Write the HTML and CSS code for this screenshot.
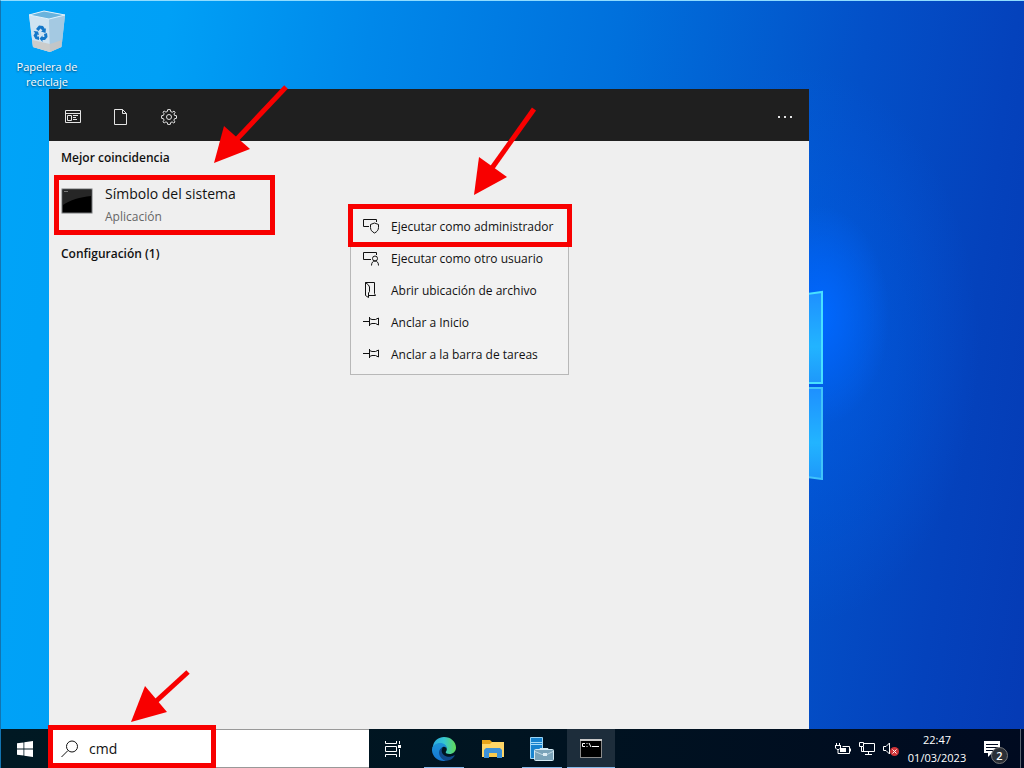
FILE: index.html
```html
<!DOCTYPE html>
<html lang="es">
<head>
  <meta charset="UTF-8" />
  <meta name="viewport" content="width=device-width, initial-scale=1.0"/>
  <title>Símbolo del sistema</title>
  <link rel="stylesheet" href="styles.css">
</head>
<body>
  <div class="desktop">
    <div class="shortcuts">
      <a href="#" class="shortcut">
        <svg width="40" height="44" viewBox="0 0 40 44">
          <path d="M2 6L17 2L38 6L34.500 38L23 43L6 38Z" fill="#b9d9ee"/>
          <path d="M2 6L22 10L23 43L6 38Z" fill="#cfe3f1"/>
          <path d="M22 10L38 6L34.500 38L23 43Z" fill="#a4c9e2"/>
          <path d="M5 31L23 35L35 31L34 38L23 43L6 38Z" fill="#c9c5c2" opacity=".8"/>
          <path d="M2 6L17 2L38 6L22 10Z" fill="#69b3dd" stroke="#dff1fb"/>
          <g fill="#1477c9">
            <path d="M9 20L12 16.500L16 17L18 20L19 19L18.500 24L14 22.500L15.500 21.500L13.500 19.500L11.500 22Z"/>
            <path d="M17 25L20 24L20.500 28L18 31H15.500V33L12.500 29.500L15.500 26.500V28H17.500Z"/>
            <path d="M6.500 22L11 22.500L12 26L10.500 25.500L10 27.500H12V31L8.500 30L6.500 26.500L8 24Z"/>
          </g>
        </svg>
        <span>Papelera de reciclaje</span>
      </a>
    </div>

    <main class="workspace">
      <section class="panel">
        <header class="panel-bar">
          <button type="button" aria-label="Aplicaciones">
            <svg width="16" height="16" viewBox="0 0 16 16"><path d="M.5 1.500H15.500V13.500H.5ZM.5 4.500H15.500M2.500 6.500H6.500V11.500H2.500ZM8 6.500H13M8 8.500H11M8 10.500H12"/></svg>
          </button>
          <button type="button" aria-label="Documentos">
            <svg width="16" height="16" viewBox="0 0 16 16"><path d="M1.500 .5H9.500L13.500 4.500V15.500H1.500ZM9.500 .5V4.500H13.500"/></svg>
          </button>
          <button type="button" aria-label="Configuración">
            <svg width="16" height="16" viewBox="0 0 16 16"><circle cx="8" cy="8" r="2.500"/><path d="M6.700 .6H9.300L9.700 2.600L11.300 3.200L13 2.100L14.100 3.300L13 5L13.500 6.400L15.500 6.700V9.300L13.500 9.700L12.900 11.200L14 12.900L12.800 14L11.100 12.900L9.700 13.500L9.300 15.400H6.700L6.300 13.500L4.900 12.900L3.200 14L2 12.800L3.100 11.100L2.500 9.700L.6 9.300V6.700L2.500 6.300L3.100 4.800L2 3.200L3.200 2L4.900 3.100L6.300 2.500Z"/></svg>
          </button>
          <button type="button" class="more" aria-label="Más opciones">
            <svg width="16" height="16" viewBox="0 0 16 16"><path class="solid" d="M1 7H3V9H1ZM7 7H9V9H7ZM13 7H15V9H13Z"/></svg>
          </button>
        </header>

        <div class="results">
          <h2>Mejor coincidencia</h2>
          <button type="button" class="result marked">
            <svg width="32" height="26" viewBox="0 0 32 26">
              <rect x="1" y="1" width="30" height="24" fill="#000" stroke="#77797b"/>
              <path d="M2 2H30V8C19 9 9 12 2 17Z" fill="#262626"/>
              <path d="M3 3.500H7" stroke="#777"/>
            </svg>
            <span>
              <strong>Símbolo del sistema</strong>
              <small>Aplicación</small>
            </span>
          </button>
          <h2>Configuración (1)</h2>
        </div>

        <div class="menu" role="menu">
          <button type="button" role="menuitem" class="marked">
            <svg width="16" height="16" viewBox="0 0 16 16"><path d="M6 8.500H.5V1.500H13.500V4M11.500 5L15.500 6.500V9.500C15.500 12 14 13.800 11.500 15C9 13.800 7.500 12 7.500 9.500V6.500Z"/></svg>
            Ejecutar como administrador
          </button>
          <button type="button" role="menuitem">
            <svg width="16" height="16" viewBox="0 0 16 16"><path d="M8 9.500H.5V2.500H13.500V5M8.500 15.500C8.500 12.500 10 11 12 11C14 11 15.500 12.500 15.500 15.500"/><circle cx="12" cy="8.500" r="2.500"/></svg>
            Ejecutar como otro usuario
          </button>
          <button type="button" role="menuitem">
            <svg width="16" height="16" viewBox="0 0 16 16"><path d="M2.500 .5H11.500V11.500L12.500 13.500H6M2.500 .5V13.500L5.500 15.500V11L6.500 9.500V5L5.500 3L2.500 .5"/></svg>
            Abrir ubicación de archivo
          </button>
          <button type="button" role="menuitem">
            <svg width="16" height="16" viewBox="0 0 16 16"><path d="M0 7.500H6M6.500 3V12M6.500 4.500L9 5.500H12.500L15.500 4V11L12.500 9.500H9L6.500 10.500"/></svg>
            Anclar a Inicio
          </button>
          <button type="button" role="menuitem">
            <svg width="16" height="16" viewBox="0 0 16 16"><path d="M0 7.500H6M6.500 3V12M6.500 4.500L9 5.500H12.500L15.500 4V11L12.500 9.500H9L6.500 10.500"/></svg>
            Anclar a la barra de tareas
          </button>
        </div>

        <svg class="arrow arrow-result" width="76" height="82" viewBox="0 0 76 82"><path d="M73 3L24 55"/><polygon points="1,79 11,42 37,65"/></svg>
        <svg class="arrow arrow-menu" width="66" height="90" viewBox="0 0 66 90"><path d="M62 2L20 61"/><polygon points="2,88 7,50 35,70"/></svg>
        <svg class="arrow arrow-search" width="60" height="54" viewBox="0 0 60 54"><path d="M57 3L22 35"/><polygon points="0,53 14,17 36,43"/></svg>
      </section>

      <svg class="window-logo" width="15" height="190" viewBox="0 0 15 190">
        <defs>
          <linearGradient id="pane" x1="0" y1="0" x2="0" y2="1">
            <stop offset="0" stop-color="#1e90ff"/><stop offset=".6" stop-color="#22b4ff"/><stop offset="1" stop-color="#1e98fa"/>
          </linearGradient>
        </defs>
        <path d="M-2 4L13 2V93H-2Z" fill="url(#pane)" stroke="#48e0ff" stroke-width="2"/>
        <path d="M-2 98H13V189L-2 187Z" fill="url(#pane)" stroke="#40c4fa" stroke-width="2"/>
      </svg>
    </main>

    <footer class="taskbar">
      <button type="button" class="start" aria-label="Inicio">
        <svg width="16" height="16" viewBox="0 0 16 16"><path d="M0 2.300L6.500 1.400V7.500H0ZM7.300 1.300L16 0V7.500H7.300ZM0 8.400H6.500V14.600L0 13.700ZM7.300 8.400H16V16L7.300 14.700Z"/></svg>
      </button>
      <label class="search">
        <svg width="18" height="18" viewBox="0 0 18 18"><circle cx="11" cy="6.500" r="5.500"/><path d="M7 10.500L.5 17"/></svg>
        <input type="text" value="cmd" aria-label="Buscar" />
      </label>

      <nav class="apps">
        <button type="button" aria-label="Vista de tareas">
          <svg width="18" height="16" viewBox="0 0 18 16" fill="none" stroke="#fff"><path d="M1.500 0V2.500H12.500V0M1.500 16V13.500H12.500V16M1.500 5.500H12.500V10.500H1.500ZM15.500 0V3M15.500 8V16"/><rect x="14" y="4" width="3" height="3" fill="#fff" stroke="none"/></svg>
        </button>
        <button type="button" class="open" aria-label="Microsoft Edge">
          <svg width="24" height="24" viewBox="0 0 24 24">
            <defs>
              <linearGradient id="edge-top" x1="0" y1="0" x2="1" y2="0"><stop offset="0" stop-color="#2aa8e0"/><stop offset=".5" stop-color="#35c6d3"/><stop offset="1" stop-color="#63db55"/></linearGradient>
              <linearGradient id="edge-body" x1="0" y1="0" x2="0" y2="1"><stop offset="0" stop-color="#1d94d8"/><stop offset="1" stop-color="#1576d2"/></linearGradient>
            </defs>
            <path d="M1 9C2 3.500 6.500 0 12 0C19 0 24 5 24 10.500C24 14.500 21 17 17.500 17C15 17 13.500 16 13.700 15C14.300 14.300 14.800 13.300 14.800 12C14.800 9.300 12 7 8.500 7C5 7 2 8.500 0 12Z" fill="url(#edge-top)"/>
            <path d="M0 12C1 8.500 4 6 8 6C12.500 6 15 9 14.800 12C14.500 10.500 13 9.500 11.500 9.800C8.500 11 7.500 14 8.500 17.500C9.500 21 12 23.500 15 23.600C6.500 25.500 -.5 19.500 0 12Z" fill="url(#edge-body)"/>
            <path d="M11.300 9.900C9 12 9 16 12.500 18.500C15.500 20.600 19.500 20 22 18.300C22.600 18 22.900 18.400 22.500 18.900C20.500 21.700 18 23.500 14.500 23.700C10.500 23.500 7 19.500 7 15.500C7 13 8.500 10.800 11.300 9.900Z" fill="#114a8b"/>
          </svg>
        </button>
        <button type="button" aria-label="Explorador de archivos">
          <svg width="24" height="20" viewBox="0 0 24 20">
            <path d="M1 1H9L11 3H23V7H1Z" fill="#e8a51b"/>
            <path d="M1 5H9L11 3H23V18H1Z" fill="#ffd667"/>
            <path d="M3 19V11L5 9H19L21 11V19H16V14H8V19Z" fill="#3d91d8"/>
            <path d="M8 14H16V18H8Z" fill="#f8c94d"/>
          </svg>
        </button>
        <button type="button" class="open" aria-label="Administrador del servidor">
          <svg width="24" height="24" viewBox="0 0 24 24">
            <path d="M.5 .5H12.500V21.500H.5Z" fill="#1683cf" stroke="#9bd4f5"/>
            <path d="M1 5.500H12M1 7.500H12" stroke="#a8dcf8"/>
            <path d="M10 13V11.500H18V13" fill="none" stroke="#d5eaf4"/>
            <rect x="4.500" y="12.500" width="19" height="11" rx="1" fill="#7aa3b9" stroke="#d5eaf4"/>
            <path d="M5 14.500L12 17.500H17L23 14.500" fill="none" stroke="#bdd6e2"/>
            <path d="M13 16H17V19H13Z" fill="#dcecf4"/>
          </svg>
        </button>
        <button type="button" class="active" aria-label="Símbolo del sistema">
          <svg width="24" height="20" viewBox="0 0 24 20">
            <rect x="1.500" y="1.500" width="21" height="18" fill="#000" stroke="#8c8c8c"/>
            <path d="M1 2H23" stroke="#c8c8c8" stroke-width="2"/>
            <path d="M6 5.500H3.500V8.500H6M8 5V6M8 8V9M10 5L12 9M13 8.500H20" fill="none" stroke="#fff"/>
          </svg>
        </button>
      </nav>

      <div class="tray">
        <button type="button" aria-label="Batería">
          <svg width="16" height="16" viewBox="0 0 16 16"><path d="M1.500 2V5M4.500 2V5M0 4.500H6M.5 5V7L2 8.500H4L5.500 7V5M3 8.500V12.500H14.500V5.500H7.500M15.500 7.500V10.500"/><path class="solid" d="M5 7H11V11H5Z"/></svg>
        </button>
        <button type="button" aria-label="Red">
          <svg width="16" height="16" viewBox="0 0 16 16"><path d="M5 2.500H15.500V10.500H4.500V6M.5 1.500H4.500V5.500H.5ZM2.500 5V10.500H5M9.500 11V13.500M6 13.500H13"/></svg>
        </button>
        <button type="button" aria-label="Volumen silenciado">
          <svg width="16" height="16" viewBox="0 0 16 16"><path d="M.5 5.500H3L6.500 2V13L3 9.500H.5Z"/><circle class="mute" cx="11.500" cy="10.500" r="4.500"/><path d="M9.500 8.500L13.500 12.500M13.500 8.500L9.500 12.500"/></svg>
        </button>
        <button type="button" class="clock"><time>22:47</time><time>01/03/2023</time></button>
        <button type="button" class="notices" aria-label="Notificaciones">
          <svg width="16" height="16" viewBox="0 0 16 16"><path class="solid" d="M0 0H16V12H8L4 16V12H0Z"/><path class="lines" d="M2 3.500H14M2 6.500H14M2 9.500H10"/></svg>
          <span class="badge">2</span>
        </button>
      </div>
    </footer>
  </div>
</body>
</html>
```
FILE: styles.css
```css
* {
  box-sizing: border-box;
}
body {
  margin: 0;
  font-family: "Open Sans", "Noto Sans", sans-serif;
  font-size: 12px;
  color: #111;
}
button {
  border: 0;
  padding: 0;
  background: none;
  font: inherit;
  color: inherit;
  text-align: left;
}
svg {
  display: block;
  flex: none;
}
.desktop {
  min-height: 100vh;
  display: flex;
  flex-direction: column;
  border-top: 1px solid #8fdcff;
  border-left: 1px solid #1274b0;
  background:
    radial-gradient(ellipse 70px 110px at 80% 41%, #0068ff, rgba(0, 104, 255, 0)),
    radial-gradient(ellipse 180px 280px at 78% 45%, rgba(0, 98, 240, .6), rgba(0, 98, 240, 0)),
    linear-gradient(98deg, #00a4f8 0%, #00a0f6 15%, #0088ea 33%, #0070dc 55%, #0350c8 77%, #0442bc 90%, #053ab4 100%);
}

/* desktop icons */
.shortcuts {
  height: 88px;
  padding: 8px;
}
.shortcut {
  width: 76px;
  display: flex;
  flex-direction: column;
  align-items: center;
  gap: 6px;
  color: #fff;
  font-size: 11px;
  line-height: 15px;
  text-align: center;
  text-decoration: none;
  text-shadow: 0 1px 2px #00406a;
}

/* search panel */
.workspace {
  flex: 1;
  display: grid;
  grid-template-columns: 48px minmax(0, 760px) 1fr;
}
.panel {
  grid-column: 2;
  position: relative;
  background: #efefef;
}
.panel-bar {
  height: 52px;
  display: flex;
  align-items: center;
  gap: 32px;
  padding: 4px 16px 0;
  background: #1f1f1f;
}
.panel-bar svg {
  fill: none;
  stroke: #e4e4e4;
}
.panel-bar .solid {
  fill: #e4e4e4;
  stroke: none;
}
.more {
  margin-left: auto;
}
.results {
  width: 232px;
  padding: 8px 6px;
}
.results h2 {
  margin: 0;
  padding: 0 6px;
  font-size: 12px;
  line-height: 18px;
  font-weight: 600;
}
.result {
  width: 220px;
  height: 60px;
  display: flex;
  align-items: center;
  gap: 12px;
  margin: 8px 0 10px;
  padding: 0 6px;
}
.result svg {
  margin-bottom: 8px;
}
.result strong,
.result small {
  display: block;
  font-weight: 400;
}
.result strong {
  font-size: 14px;
  line-height: 24px;
}
.result small {
  font-size: 12px;
  line-height: 22px;
  color: #666;
}
.marked {
  position: relative;
}
.marked::after {
  content: "";
  position: absolute;
  inset: 0 0 0 -1px;
  border: 5px solid #f80000;
}
.menu {
  position: absolute;
  top: 116px;
  left: 301px;
  width: 219px;
  padding: 4px 0;
  border: 1px solid #b8b8b8;
  background: #f2f2f2;
}
.menu button {
  width: 100%;
  height: 32px;
  display: flex;
  align-items: center;
  gap: 12px;
  padding: 0 12px;
  white-space: nowrap;
}
.menu svg {
  fill: none;
  stroke: #111;
}
.menu .marked::after {
  inset: -6px -4px -5px -3px;
}
.arrow {
  position: absolute;
  fill: #f80000;
}
.arrow path {
  stroke: #f80000;
  stroke-width: 5;
}
.arrow-result {
  top: -5px;
  left: 164px;
}
.arrow-menu {
  top: 18px;
  left: 423px;
}
.arrow-search {
  bottom: 6px;
  left: 82px;
}
.window-logo {
  margin-top: 201px;
}

/* taskbar */
.taskbar {
  height: 39px;
  display: flex;
  background: linear-gradient(90deg, #001923, #001421 50%, #000a20);
  color: #fff;
}
.start {
  width: 48px;
  display: flex;
  align-items: center;
  justify-content: center;
  fill: #fff;
}
.search {
  position: relative;
  flex: 0 1 320px;
  display: flex;
  align-items: center;
  gap: 10px;
  padding: 0 12px;
  border-top: 1px solid #999;
  border-bottom: 1px solid #999;
  background: #fff;
}
.search svg {
  fill: none;
  stroke: #111;
}
.search input {
  width: 100%;
  border: 0;
  padding: 0;
  outline: 0;
  font: inherit;
  font-size: 14px;
  color: #111;
}
.search::after {
  content: "";
  position: absolute;
  top: -5px;
  bottom: -1px;
  left: -1px;
  width: 158px;
  border: 5px solid #f80000;
}
.apps {
  display: flex;
  gap: 1px;
}
.apps button {
  width: 48px;
  display: flex;
  align-items: center;
  justify-content: center;
}
.apps button:first-child {
  margin-right: 2px;
}
.open {
  background: linear-gradient(#84b8e8, #84b8e8) center bottom / 40px 1px no-repeat;
}
.active {
  background: #1d2d3b;
  border-bottom: 1px solid #84b8e8;
}
.tray {
  margin-left: auto;
  display: flex;
  align-items: center;
  gap: 8px;
  padding-right: 3px;
}
.tray svg {
  fill: none;
  stroke: #fff;
}
.tray .solid {
  fill: #fff;
  stroke: none;
}
.tray .lines {
  stroke: #000a20;
}
.tray .mute {
  fill: #d13438;
  stroke: none;
}
.clock {
  width: 60px;
  font-size: 11px;
  line-height: 18px;
}
.clock time {
  display: block;
  text-align: center;
}
.notices {
  position: relative;
  width: 46px;
  height: 100%;
  display: flex;
  align-items: center;
  padding-left: 9px;
  border-right: 1px solid #5a6470;
}
.badge {
  position: absolute;
  top: 18px;
  left: 16px;
  width: 17px;
  height: 17px;
  border: 1px solid #777;
  border-radius: 50%;
  background: #2b2f36;
  font-size: 11px;
  line-height: 15px;
  font-weight: 600;
  text-align: center;
}
```
